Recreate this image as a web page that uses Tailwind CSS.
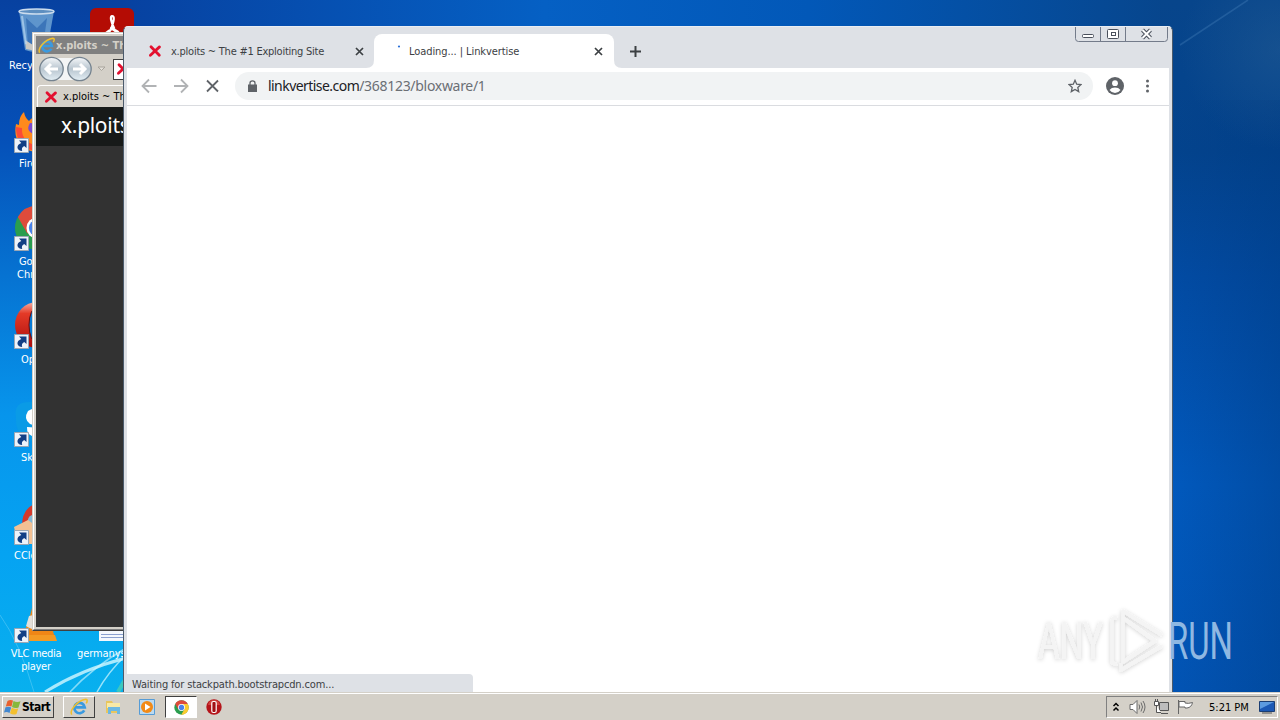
<!DOCTYPE html>
<html lang="en">
<head>
    <meta charset="UTF-8">
    <title>Desktop</title>
    <script src="https://cdn.jsdelivr.net/npm/@tailwindcss/browser@4"></script>
</head>
<body class="w-[1280px] h-[720px] overflow-hidden flex flex-col font-['DejaVu_Sans_Condensed','DejaVu_Sans',sans-serif] text-[11px] leading-[13px] text-black">

    <!-- Shared icons -->
    <svg class="hidden">
        <symbol id="shortcut" viewBox="0 0 15 15">
            <path d="M.5.5h14v14H.5z" fill="#eef3fa" stroke="#9aa7b5"/>
            <path d="M5 2.500h7.500V10L10.200 8Q7 9.500 8.200 13 4.500 13 3.500 10 3 6.500 7.300 5z" fill="#123f85"/>
        </symbol>
        <symbol id="cross" viewBox="0 0 14 14">
            <path d="M3 2.700 11.300 11.300M11.500 2.900 2.400 11.200" fill="none" stroke="#e3102f" stroke-width="2.800" stroke-linecap="round"/>
        </symbol>
        <symbol id="chrome" viewBox="0 0 48 48">
            <circle cx="24" cy="24" r="23" fill="#2a9d4e"/>
            <path d="M4 12.500A23 23 0 0 1 44 12.500H24L14 30z" fill="#de4b3b"/>
            <path d="M44 12.500A23 23 0 0 1 23 47L34 29 24 12.500z" fill="#fbcb2f"/>
            <circle cx="24" cy="24" r="11" fill="#fff"/>
            <circle cx="24" cy="24" r="8.500" fill="#4a83ea"/>
        </symbol>
        <symbol id="ie" viewBox="0 0 20 20">
            <path d="M15.800 13.800a5.800 5.800 0 1 1 .6-3.300H5.500" fill="none" stroke="#3a9ae0" stroke-width="3"/>
            <path d="M2 18.500C-1 14 8 3 17.500 1.500c2.500 0 1.500 3 .5 4.500" fill="none" stroke="#f0bf2c" stroke-width="1.700"/>
        </symbol>
    </svg>

    <!-- Desktop -->
    <main class="relative flex-1 overflow-hidden">
        <svg class="absolute inset-0" width="1280" height="692" viewBox="0 0 1280 692">
            <defs>
                <linearGradient id="left" x1="0" y1="0" x2="0" y2="1">
                    <stop offset="0" stop-color="#0741a0"/>
                    <stop offset=".2" stop-color="#0550b8"/>
                    <stop offset=".4" stop-color="#0673d2"/>
                    <stop offset=".6" stop-color="#0795ec"/>
                    <stop offset=".8" stop-color="#05a3f2"/>
                    <stop offset="1" stop-color="#08b0ee"/>
                </linearGradient>
                <linearGradient id="right" x1="0" y1="0" x2="0" y2="1">
                    <stop offset="0" stop-color="#07458b"/>
                    <stop offset=".22" stop-color="#03438d"/>
                    <stop offset=".4" stop-color="#024ba3"/>
                    <stop offset=".7" stop-color="#0159bd"/>
                    <stop offset="1" stop-color="#0254b4"/>
                </linearGradient>
                <linearGradient id="top" x1="0" y1="0" x2="1" y2="0">
                    <stop offset="0" stop-color="#0741a0"/>
                    <stop offset=".4" stop-color="#0560c4"/>
                    <stop offset=".65" stop-color="#0258b8"/>
                    <stop offset="1" stop-color="#07458b"/>
                </linearGradient>
                <linearGradient id="shade" x1="0" y1="0" x2="1" y2="0">
                    <stop offset="0" stop-color="#003a80" stop-opacity="0"/>
                    <stop offset="1" stop-color="#003a80" stop-opacity=".4"/>
                </linearGradient>
                <radialGradient id="glow" cx="1280" cy="50" r="100" gradientUnits="userSpaceOnUse">
                    <stop offset="0" stop-color="#2c6295" stop-opacity=".4"/>
                    <stop offset="1" stop-color="#2c6295" stop-opacity="0"/>
                </radialGradient>
            </defs>
            <path d="M0 0h200v692H0z" fill="url(#left)"/>
            <path d="M120 0h1060v40H120z" fill="url(#top)"/>
            <path d="M1160 0h120v692h-120z" fill="url(#right)"/>
            <path d="M1172 100h108v592h-108z" fill="url(#shade)"/>
            <path d="M1172 0h108v160h-108z" fill="url(#glow)"/>
            <path d="M1180 45 1248 0" stroke="#4a84bd" stroke-width="1.500" opacity=".35"/>
            <g fill="none" stroke="#d5f8ff">
                <path d="M45 692Q80 670 126 658" stroke-width="3" opacity=".8"/>
                <path d="M70 692Q92 668 126 648" stroke-width="1.500" opacity=".6"/>
                <path d="M97 692Q108 672 126 655" stroke-width="1.500" opacity=".7"/>
                <path d="M0 615q20 28 34 77" stroke-width="1" opacity=".25"/>
                <path d="M118 692l8-14" stroke="#5fd8a0" stroke-width="4" opacity=".6"/>
            </g>
        </svg>

        <!-- Desktop icons -->
        <svg class="absolute left-[14px] top-[6px]" width="46" height="48" viewBox="0 0 46 48">
            <path d="M5 5 11 44q11 4 22 0l7-39z" fill="#6fa3d4" opacity=".85"/>
            <path d="M12 12l2 28q8 3 15 0l4-28-10 10z" fill="#2d68b0" opacity=".7"/>
            <path d="M11 34l8 5 3 6-10-2z" fill="#c8c8c4"/>
            <ellipse cx="22.500" cy="5.500" rx="17.500" ry="2.500" fill="#5e8fc0" stroke="#cbdced" stroke-width="1.500"/>
            <path d="M8 10l4 28" stroke="#b6d6f2" stroke-width="2" opacity=".7"/>
        </svg>
        <span class="absolute left-[9px] top-[59px] text-white">Recycle Bin</span>

        <svg class="absolute left-[90px] top-[8px]" width="44" height="44" viewBox="0 0 44 44">
            <rect width="44" height="44" rx="6" fill="#b40c04"/>
            <path d="M19 27q-5 4-5 1t10-8q-5-11-2-12 4 0-1 13-1 2-4 6m3-7q7 2 9 5t-8-5" fill="none" stroke="#fff" stroke-width="2.200"/>
        </svg>

        <svg class="absolute left-[14px] top-[108px]" width="46" height="46" viewBox="0 0 46 46">
            <path d="M23 44C6 43-1 31 2 16l3 1q0-9 5-13 1 6 5 9 4-5 11-5 18 3 18 18-2 17-21 18z" fill="#ff8a1c"/>
            <path d="M2 19q0 16 12 22l10 3 3-6Q7 36 8 20z" fill="#fb4b38"/>
            <path d="M16 15q-5 8 4 11l8-10z" fill="#7a4ad0"/>
        </svg>
        <svg class="absolute left-[14px] top-[138px]" width="15" height="15"><use href="#shortcut"/></svg>
        <span class="absolute left-[19px] top-[157px] text-white">Firefox</span>

        <svg class="absolute left-[14px] top-[205px]" width="46" height="46"><use href="#chrome"/></svg>
        <svg class="absolute left-[14px] top-[236px]" width="15" height="15"><use href="#shortcut"/></svg>
        <span class="absolute left-[17px] top-[255px] text-center text-white">Google<br>Chrome</span>

        <svg class="absolute left-[15px] top-[302px]" width="44" height="46" viewBox="0 0 44 46">
            <defs>
                <linearGradient id="opera" x1="0" y1="0" x2="0" y2="1">
                    <stop offset="0" stop-color="#f5b0a5"/>
                    <stop offset=".25" stop-color="#e43a27"/>
                    <stop offset="1" stop-color="#a90c0c"/>
                </linearGradient>
            </defs>
            <ellipse cx="22" cy="23" rx="22" ry="23" fill="url(#opera)"/>
            <ellipse cx="22" cy="23" rx="8" ry="18" fill="#087bd6" stroke="#6d0b0b"/>
        </svg>
        <svg class="absolute left-[14px] top-[334px]" width="15" height="15"><use href="#shortcut"/></svg>
        <span class="absolute left-[21px] top-[353px] text-white">Opera</span>

        <svg class="absolute left-[14px] top-[400px]" width="46" height="46" viewBox="0 0 46 46">
            <path d="M2 18Q-1 2 15 2q7-1 10 3 20 0 19 22l-8 16-20-2Q1 35 2 18z" fill="#0a9be6"/>
            <path d="M30 12q-9-6-16-1-5 8 2 13l12 4-15-1q-1 12 15 9 13-3 7-14l-14-8z" fill="#fff"/>
        </svg>
        <svg class="absolute left-[14px] top-[432px]" width="15" height="15"><use href="#shortcut"/></svg>
        <span class="absolute left-[21px] top-[451px] text-white">Skype</span>

        <svg class="absolute left-[14px] top-[500px]" width="46" height="46" viewBox="0 0 46 46">
            <path d="M8 28Q7 5 28 2v40z" fill="#d5392b"/>
            <path d="M14 24q-2-10 10-10v20z" fill="#83b9d8"/>
            <path d="M0 27l14-7 8 6v18H4z" fill="#f3c194"/>
        </svg>
        <svg class="absolute left-[14px] top-[530px]" width="15" height="15"><use href="#shortcut"/></svg>
        <span class="absolute left-[14px] top-[549px] text-white">CCleaner</span>

        <svg class="absolute left-[14px] top-[598px]" width="46" height="44" viewBox="0 0 46 44">
            <path d="M14 26 20 2h4l8 24 6 4 4 13H4z" fill="#ef8616"/>
            <path d="M15 18 12 28q6 4 12 4V16z" fill="#e4e0da"/>
            <path d="M5 37h36l2 6H4z" fill="#f39a24"/>
        </svg>
        <svg class="absolute left-[14px] top-[628px]" width="15" height="15"><use href="#shortcut"/></svg>
        <span class="absolute left-[6px] w-[60px] top-[647px] text-center tracking-[-0.3px] text-white">VLC media player</span>

        <svg class="absolute left-[99px] top-[600px]" width="36" height="41">
            <path d="M0 0h36v41H0z" fill="#f4f8fd"/>
            <path d="M2 34.500h34M2 37.500h34" stroke="#8aa0d0"/>
        </svg>
        <span class="absolute left-[77px] top-[647px] tracking-[-0.1px] text-white">germanyspeed</span>

        <!-- Internet Explorer window -->
        <section class="absolute left-[32px] top-[32px] w-[400px] h-[599px] border border-t-[#d4d0c8] border-l-[#d4d0c8] border-[#404040] bg-[#d4d0c8]">
            <div class="size-full flex flex-col border-t border-l border-white border-b border-b-[#808080] p-[2px]">
                <div class="h-[18px] shrink-0 flex items-center bg-[#808080] text-[#d4d0c8] font-bold">
                    <svg class="ml-[2px] mr-px shrink-0" width="17" height="17"><use href="#ie"/></svg>
                    <span class="w-[70px] overflow-hidden whitespace-nowrap">x.ploits ~ The</span>
                </div>
                <div class="h-[30px] shrink-0 flex items-center pl-[3px]">
                    <svg width="54" height="28" viewBox="0 0 54 28">
                        <defs>
                            <linearGradient id="nav" x1="0" y1="0" x2="0" y2="1">
                                <stop offset="0" stop-color="#f6f8fa"/>
                                <stop offset=".5" stop-color="#b8c5cf"/>
                                <stop offset="1" stop-color="#e4eff5"/>
                            </linearGradient>
                        </defs>
                        <path d="M12 3h28v22H12z" fill="#f4f5f5"/>
                        <circle cx="12.500" cy="14" r="11.700" fill="url(#nav)" stroke="#75838f" stroke-width="1.300"/>
                        <circle cx="40.500" cy="14" r="11.700" fill="url(#nav)" stroke="#75838f" stroke-width="1.300"/>
                        <path d="M19 14H7m5-5-5 5 5 5M34 14h12m-5-5 5 5-5 5" fill="none" stroke="#fff" stroke-width="3"/>
                    </svg>
                    <svg class="ml-[4px]" width="10" height="6"><path d="M1 1h7L4.500 4.500z" fill="#e4e1da" stroke="#a9a59d"/></svg>
                    <div class="ml-[6px] w-[200px] h-[21px] border border-[#404040] bg-white flex items-center">
                        <svg class="ml-[2px]" width="14" height="14"><use href="#cross"/></svg>
                    </div>
                </div>
                <div class="h-[23px] shrink-0 flex items-end">
                    <div class="w-[220px] h-[22px] ml-px flex items-center rounded-t-sm border-t border-l border-white pl-[6px]">
                        <svg width="14" height="14"><use href="#cross"/></svg>
                        <span class="ml-[5px] w-[64px] overflow-hidden whitespace-nowrap">x.ploits ~ The</span>
                    </div>
                </div>
                <div class="flex-1 flex flex-col bg-[#323232]">
                    <div class="h-[39px] bg-[#171a19] pl-[25px] pt-[6px] font-['Noto_Sans',sans-serif] text-[21px] leading-[24px] tracking-[-0.3px] text-white">x.ploits</div>
                </div>
            </div>
        </section>

        <!-- Chrome window -->
        <section class="absolute left-[123px] top-[26px] w-[1050px] h-[670px] flex flex-col rounded-t-[5px] border border-[#4c5b6c] border-t-[#e9edf3] bg-[#dee1e6] overflow-hidden">
            <!-- Tab strip -->
            <div class="h-[41px] shrink-0 flex items-end relative">
                <div class="w-[250px] h-[34px] flex items-center pl-[24px] pr-[10px] text-[#3c4043]">
                    <svg width="14" height="14"><use href="#cross"/></svg>
                    <span class="ml-[9px] flex-1 whitespace-nowrap tracking-[-0.24px]">x.ploits ~ The #1 Exploiting Site</span>
                    <svg width="9" height="9"><path d="m1 1 7 7M8 1 1 8" stroke="#3c4043" stroke-width="1.700"/></svg>
                </div>
                <div class="w-[240px] h-[34px] flex items-center pl-[17px] pr-[11px] rounded-t-lg bg-white text-[#3c4043]">
                    <svg width="16" height="16"><circle cx="8" cy="3.500" r="1.100" fill="#2b70d8"/></svg>
                    <span class="ml-[2px] flex-1 whitespace-nowrap tracking-[-0.08px]">Loading... | Linkvertise</span>
                    <svg width="9" height="9"><path d="m1 1 7 7M8 1 1 8" stroke="#3c4043" stroke-width="1.700"/></svg>
                </div>
                <svg class="ml-[15px] mb-[10px]" width="13" height="13"><path d="M6.500 1v11M1 6.500h11" stroke="#3c4043" stroke-width="2"/></svg>
                <!-- Flared feet of the active tab -->
                <svg class="absolute left-[242px] bottom-0" width="8" height="8"><path d="M8 0v8H0q8 0 8-8z" fill="#fff"/></svg>
                <svg class="absolute left-[490px] bottom-0" width="8" height="8"><path d="M0 0v8h8q-8 0-8-8z" fill="#fff"/></svg>
                <!-- Window buttons -->
                <svg class="absolute left-[951px] -top-px" width="94" height="17" viewBox="0 0 94 17" fill="none" stroke="#737b8a">
                    <path d="M.5 0v12.500q0 3 3 3h86q3 0 3-3V0M25.500 0v15M50.500 0v15"/>
                    <g stroke="#4a505c">
                        <rect x="7.500" y="8.500" width="11" height="3" rx="1" fill="#fff"/>
                        <rect x="32.500" y="3.500" width="11" height="9" rx="1" fill="#fff"/>
                        <rect x="36.500" y="6.500" width="4" height="3"/>
                    </g>
                    <path d="m67.500 4 8 8m0-8-8 8" stroke="#4a505c" stroke-width="4"/>
                    <path d="m67.500 4 8 8m0-8-8 8" stroke="#fff" stroke-width="2"/>
                </svg>
            </div>

            <!-- Toolbar -->
            <div class="h-[38px] shrink-0 ml-[3px] mr-[3px] pb-px flex items-center bg-white border-b border-[#dadce0]">
                <svg class="ml-[14px]" width="78" height="16" fill="none" stroke="#b1b3b5" stroke-width="1.800">
                    <path d="M15.500 8H2M8 1.500 1.500 8 8 14.500M33 8h13.500M40 1.500 46.500 8 40 14.500"/>
                    <path d="m66 2.500 11 11m0-11-11 11" stroke="#5f6368"/>
                </svg>
                <div class="ml-[16px] w-[858px] h-[28px] flex items-center rounded-full bg-[#f1f3f4] pl-[13px] pr-[11px]">
                    <svg width="9" height="12"><path d="M0 4.500h9V12H0z" fill="#5f6368"/><path d="M2 5V3q0-2.200 2.500-2.200T7 3v2" fill="none" stroke="#5f6368" stroke-width="1.300"/></svg>
                    <span class="ml-[11px] flex-1 font-['Noto_Sans',sans-serif] text-[14px] leading-[18px] tracking-[-0.59px] text-[#202124]"><span class="tracking-[-0.55px]">linkvertise.com</span><span class="tracking-[-0.3px] text-[#6b6f74]">/368123/bloxware/1</span></span>
                    <svg width="14" height="14" viewBox="0 0 14 14"><path d="m7 1.300 1.700 3.900 4.300.4-3.200 2.800.9 4.200L7 10.400l-3.700 2.200.9-4.200L1 5.600l4.300-.4z" fill="none" stroke="#5f6368" stroke-width="1.300"/></svg>
                </div>
                <svg class="ml-[13px]" width="18" height="18" viewBox="0 0 18 18">
                    <circle cx="9" cy="9" r="9" fill="#5f6368"/>
                    <circle cx="9" cy="6.200" r="2.900" fill="#fff"/>
                    <path d="M3.500 13q2-2.400 5.500-2.400t5.500 2.400q-2.200 3-5.500 3T3.500 13z" fill="#fff"/>
                </svg>
                <svg class="ml-[22px]" width="3" height="14" fill="#5f6368"><circle cx="1.500" cy="2" r="1.500"/><circle cx="1.500" cy="7" r="1.500"/><circle cx="1.500" cy="12" r="1.500"/></svg>
            </div>

            <!-- Page, still loading -->
            <div class="flex-1 ml-[3px] mr-[3px] flex items-end bg-white">
                <div class="w-[346px] h-[21px] pl-[5px] pt-[4px] rounded-tr-sm bg-[#dee1e6] tracking-[-0.15px] text-[#3c4043]">Waiting for stackpath.bootstrapcdn.com...</div>
            </div>
        </section>

        <!-- Watermark -->
        <svg class="absolute left-[1030px] top-[600px]" width="220" height="80" viewBox="0 0 220 80">
            <defs>
                <filter id="soft" x="-10%" y="-10%" width="120%" height="120%">
                    <feDropShadow dx="0" dy="1" stdDeviation="2" flood-color="#000" flood-opacity=".2"/>
                </filter>
            </defs>
            <g filter="url(#soft)">
                <g fill="none" stroke="#f4f4f4" stroke-width="3.500" stroke-linejoin="round" transform="translate(-3)">
                    <path d="M96 18v44l32-21z"/>
                    <path d="M90 18q-5-1-5 4v38q0 5 5 4M96 18v-7l39 24M94 63v7l41-24"/>
                </g>
                <text x="8" y="59" textLength="65" lengthAdjust="spacingAndGlyphs" fill="#f4f4f4" class="font-['Roboto',sans-serif] text-[51px]">ANY</text>
            </g>
            <text x="138" y="59" textLength="65" lengthAdjust="spacingAndGlyphs" fill="#8fb8e2" class="font-['Roboto',sans-serif] text-[51px]">RUN</text>
        </svg>
    </main>

    <!-- Taskbar -->
    <footer class="relative h-[28px] shrink-0 flex items-center border-t border-[#d4d0c8] bg-[#d4d0c8] shadow-[inset_0_1px_0_#fff] pl-[2px] pr-[2px] pt-px">
        <button class="w-[52px] h-[22px] flex items-center pl-px border border-t-white border-l-white border-[#404040] font-bold text-[12px]">
            <svg width="17" height="16" viewBox="0 0 17 16">
                <path d="M3.500 2Q6 .5 9 1.500L7.500 7.500Q5 6.300 1.800 7.500z" fill="#e8602c"/>
                <path d="M9.500 2q3.500 1.800 7 .3L14.500 8.500q-3.500 1.300-6.500-.5z" fill="#86b83c"/>
                <path d="M1.500 8.300Q5 7 7.200 8.500L5.500 14Q3 12.500 0 13.500z" fill="#4388cf"/>
                <path d="M7.800 8.800q3.200 1.800 6.400.6L12.500 15q-3.500 1.300-6.500-.7z" fill="#f3c02e"/>
            </svg>
            <span class="ml-px tracking-[-0.5px]">Start</span>
        </button>
        <div class="ml-[9px] w-[32px] h-[22px] flex items-center justify-center border border-t-white border-l-white border-[#404040]">
            <svg width="18" height="18"><use href="#ie"/></svg>
        </div>
        <svg class="ml-[10px]" width="17" height="16" viewBox="0 0 17 16">
            <path d="M1 2h6l1 2h7v10H1z" fill="#e8c65e"/>
            <path d="M2 4h13v5H2z" fill="#f8e9a6"/>
            <path d="M3 8h12v7h-3v-3H6v3H3z" fill="#6db8e2"/>
        </svg>
        <svg class="ml-[17px]" width="16" height="16" viewBox="0 0 16 16">
            <path d="M.5.500h15v15H.5z" fill="#bcdaf0" stroke="#569cd6"/>
            <circle cx="8" cy="8" r="6" fill="#f28a16"/>
            <path d="M6 4.500 11.500 8 6 11.500z" fill="#fff"/>
        </svg>
        <div class="ml-[10px] w-[32px] h-[22px] flex items-center justify-center border border-t-[#404040] border-l-[#404040] border-white bg-white">
            <svg width="15" height="15"><use href="#chrome"/></svg>
        </div>
        <svg class="ml-[9px]" width="16" height="16" viewBox="0 0 16 16">
            <circle cx="8" cy="8" r="7.700" fill="#b5141a"/>
            <path d="M2 6q1-5 6-5t6 5z" fill="#e0554f" opacity=".7"/>
            <rect x="5.800" y="2.500" width="4.400" height="11" rx="1.500" fill="#a00f14" stroke="#fff" stroke-width="1.200"/>
        </svg>
        <div class="ml-auto w-[172px] h-[22px] flex items-center border border-t-[#808080] border-l-[#808080] border-white pl-[5px]">
            <svg width="8" height="10" fill="none" stroke="#000" stroke-width="1.500"><path d="m1.500 4 2.500-2.500L6.500 4M1.500 8.500 4 6l2.500 2.500"/></svg>
            <svg class="ml-[9px]" width="17" height="16" viewBox="0 0 17 16" fill="none" stroke="#6b6b6b">
                <path d="M1 5.500h3l4-4v13l-4-4H1z" fill="#fff"/>
                <path d="M10 5.500q1.500 2.500 0 5M12 3.500q3 4.500 0 9M14 2q4 6 0 12"/>
            </svg>
            <svg class="ml-[7px]" width="17" height="16" viewBox="0 0 17 16" stroke="#555">
                <path d="M6.500 3.500h9v8h-9zM8 14.500h7" fill="#bdbdbd"/>
                <path d="M1.500 2.500h4v4h-4zM2.500 0v2M4.500 0v2M3.500 6.500v7H8" fill="#fff"/>
            </svg>
            <svg class="ml-[7px]" width="17" height="16" viewBox="0 0 17 16" fill="#fff" stroke="#666">
                <path d="M1.500 1v14M2 2.500h6v1.500q3 1 7.500-.5-1 5-5.500 5.500H8v-1H2z"/>
            </svg>
            <span class="ml-[15px] whitespace-nowrap">5:21 PM</span>
            <svg class="ml-auto mr-[2px]" width="16" height="13" viewBox="0 0 16 13">
                <path d="M.5.500h15v10H.5z" fill="#1c59b5" stroke="#1b3e73"/>
                <path d="M1 1h14L1 8z" fill="#5d9be0"/>
                <path d="M3 12h10" stroke="#555"/>
            </svg>
        </div>
    </footer>
</body>
</html>
